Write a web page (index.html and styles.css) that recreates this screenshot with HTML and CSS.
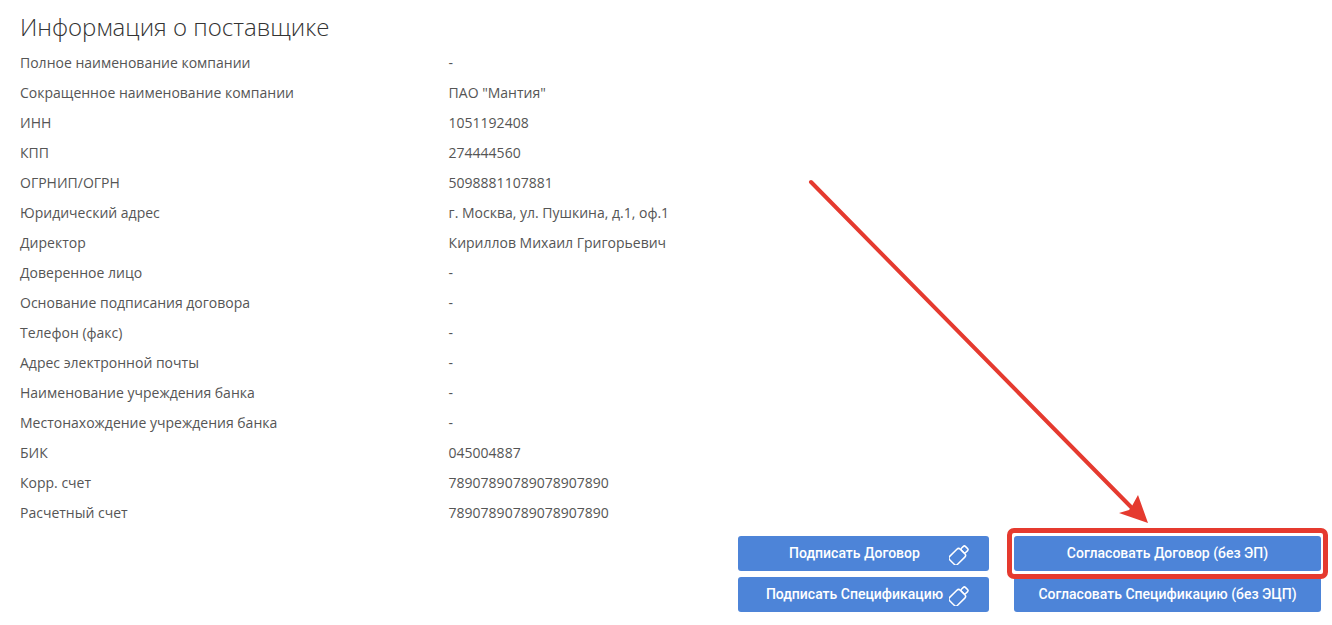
FILE: index.html
```html
<!DOCTYPE html>
<html lang="ru">
<head>
<meta charset="utf-8">
<title>Информация о поставщике</title>
<link rel="stylesheet" href="styles.css">
</head>
<body>
<main class="page">
  <h1 class="title">Информация о поставщике</h1>
  <dl class="info">
    <div class="row"><dt>Полное наименование компании</dt><dd>-</dd></div>
    <div class="row"><dt>Сокращенное наименование компании</dt><dd>ПАО "Мантия"</dd></div>
    <div class="row"><dt>ИНН</dt><dd>1051192408</dd></div>
    <div class="row"><dt>КПП</dt><dd>274444560</dd></div>
    <div class="row"><dt>ОГРНИП/ОГРН</dt><dd>5098881107881</dd></div>
    <div class="row"><dt>Юридический адрес</dt><dd>г. Москва, ул. Пушкина, д.1, оф.1</dd></div>
    <div class="row"><dt>Директор</dt><dd>Кириллов Михаил Григорьевич</dd></div>
    <div class="row"><dt>Доверенное лицо</dt><dd>-</dd></div>
    <div class="row"><dt>Основание подписания договора</dt><dd>-</dd></div>
    <div class="row"><dt>Телефон (факс)</dt><dd>-</dd></div>
    <div class="row"><dt>Адрес электронной почты</dt><dd>-</dd></div>
    <div class="row"><dt>Наименование учреждения банка</dt><dd>-</dd></div>
    <div class="row"><dt>Местонахождение учреждения банка</dt><dd>-</dd></div>
    <div class="row"><dt>БИК</dt><dd>045004887</dd></div>
    <div class="row"><dt>Корр. счет</dt><dd>78907890789078907890</dd></div>
    <div class="row"><dt>Расчетный счет</dt><dd>78907890789078907890</dd></div>
  </dl>
  <div class="actions">
    <div class="col col-sign">
      <button class="btn btn-sign" type="button"><span class="btn-label">Подписать Договор</span>
        <svg class="key" viewBox="0 0 22 22" width="22" height="22" aria-hidden="true"><g transform="rotate(45 11 11)"><rect x="5.4" y="7.4" width="11.2" height="15" rx="2.4"/><rect x="8" y="1.8" width="6" height="5.6" rx="1.4"/></g></svg>
      </button>
      <button class="btn btn-sign" type="button"><span class="btn-label">Подписать Спецификацию</span>
        <svg class="key" viewBox="0 0 22 22" width="22" height="22" aria-hidden="true"><g transform="rotate(45 11 11)"><rect x="5.4" y="7.4" width="11.2" height="15" rx="2.4"/><rect x="8" y="1.8" width="6" height="5.6" rx="1.4"/></g></svg>
      </button>
    </div>
    <div class="col col-agree">
      <button class="btn" type="button">Согласовать Договор (без ЭП)</button>
      <button class="btn" type="button">Согласовать Спецификацию (без ЭЦП)</button>
    </div>
  </div>
</main>
<div class="highlight"></div>
<svg class="arrow" width="1332" height="625" viewBox="0 0 1332 625" aria-hidden="true">
  <line x1="811" y1="182" x2="1132" y2="508"/>
  <polygon points="1148,523 1119,513 1129,510 1132,506 1138,495"/>
</svg>
</body>
</html>
```
FILE: styles.css
```css
* { box-sizing: border-box; }
html, body { margin: 0; padding: 0; background: #fff; }
body { width: 1332px; height: 625px; overflow: hidden; position: relative; font-family: "Open Sans", sans-serif; color: #555; }
.page { padding: 12px 11px 0 20px; }
.title { margin: 0 0 6px; font-size: 24px; font-weight: 300; line-height: 30px; color: #333; }
.info { margin: 0; }
.row { display: flex; height: 30px; align-items: center; font-size: 14px; line-height: 20px; }
.row dt { width: 428.6px; flex: none; }
.row dd { margin: 0; }
.actions { display: flex; justify-content: flex-end; gap: 25px; margin-top: 8px; }
.col { display: flex; flex-direction: column; gap: 6px; }
.col-sign { width: 251px; }
.col-agree { width: 307px; }
.btn { display: flex; align-items: center; justify-content: center; height: 35px; padding: 0 0 2px; border: 0; border-radius: 3px; background: #4d84d8; color: #fff; font-family: Roboto, sans-serif; font-size: 14px; font-weight: 500; }
.btn-sign { justify-content: flex-end; padding-right: 18px; }
.btn-label { flex: 1; text-align: center; padding-left: 26px; white-space: nowrap; }
.key { flex: none; margin: 2px 0 0 4px; fill: none; stroke: #fff; stroke-width: 1.5; }
.highlight { position: absolute; left: 1007px; top: 528px; width: 321px; height: 51px; border: 5px solid #e53a2f; border-radius: 7px; }
.arrow { position: absolute; left: 0; top: 0; pointer-events: none; }
.arrow line { stroke: #e53a2f; stroke-width: 4; stroke-linecap: round; }
.arrow polygon { fill: #e53a2f; }
```
